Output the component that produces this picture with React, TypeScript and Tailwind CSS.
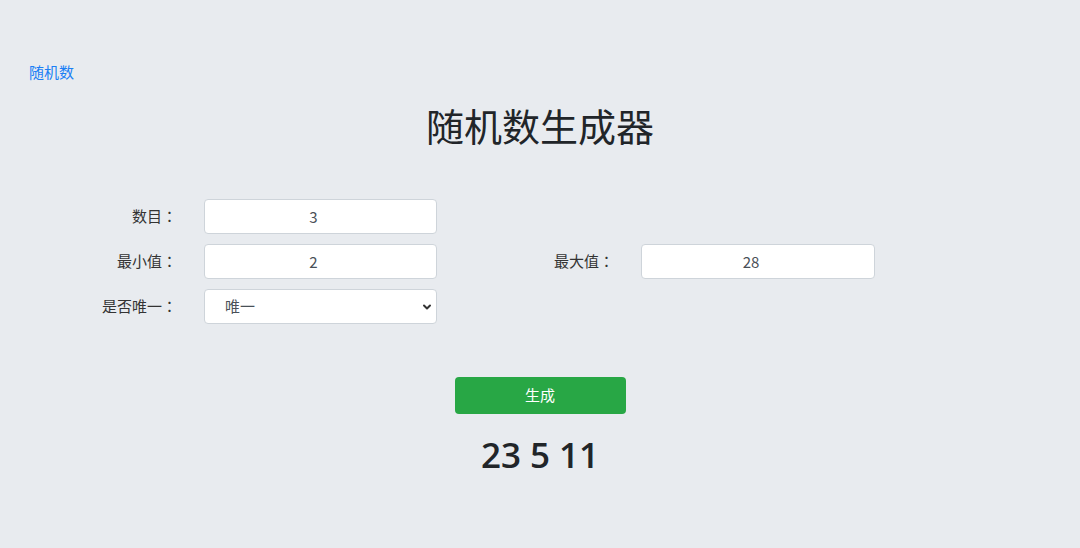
import { useState } from 'react';

const font = { fontFamily: '"Noto Sans CJK SC", "Noto Sans", sans-serif' };
const colonFont = { fontFamily: '"Noto Sans CJK JP", sans-serif' };

function Label({ text }: { text: string }) {
  return (
    <label className="flex items-center justify-end pr-[27px] text-[#333]">
      {text}
      <span style={colonFont}>：</span>
    </label>
  );
}

export default function App() {
  const [count, setCount] = useState('3');
  const [min, setMin] = useState('2');
  const [max, setMax] = useState('28');
  const [unique, setUnique] = useState('唯一');
  const [result] = useState([23, 5, 11]);

  const inputCls =
    'h-[35px] w-full rounded-[4px] border border-[#ced4da] bg-white pr-[14px] text-center text-[15px] text-[#495057] outline-none';

  return (
    <div className="h-screen w-screen bg-[#e8ebef] text-[#212529]" style={font}>
      <div className="pt-[59px] pl-[29px]">
        <a href="#" className="text-[15px] leading-[24px] text-[#1a7ff5]">
          随机数
        </a>
      </div>

      <h1 className="mt-[18px] text-center text-[38px] leading-[46px] font-normal">随机数生成器</h1>

      {/* form grid */}
      <div className="mt-[51px] grid grid-cols-[204px_233px_204px_234px] gap-y-[10px] text-[15px]">
        <Label text="数目" />
        <input className={inputCls} value={count} onChange={(e) => setCount(e.target.value)} />
        <div />
        <div />

        <Label text="最小值" />
        <input className={inputCls} value={min} onChange={(e) => setMin(e.target.value)} />
        <Label text="最大值" />
        <input className={inputCls} value={max} onChange={(e) => setMax(e.target.value)} />

        <Label text="是否唯一" />
        <div className="relative h-[35px] w-full">
          <select
            value={unique}
            onChange={(e) => setUnique(e.target.value)}
            className="h-full w-full appearance-none rounded-[4px] border border-[#ced4da] bg-white pl-[20px] text-[15px] text-[#495057] outline-none"
          >
            <option>唯一</option>
            <option>不唯一</option>
          </select>
          <svg
            className="pointer-events-none absolute top-1/2 right-[5px] h-[10px] w-[10px] -translate-y-1/2"
            viewBox="0 0 10 10"
            fill="none"
            stroke="#333"
            strokeWidth={2}
          >
            <path d="M2 3.5l3 3 3-3" strokeLinecap="round" strokeLinejoin="round" />
          </svg>
        </div>
        <div />
        <div />
      </div>

      <div className="mt-[53px] flex flex-col items-center">
        <button className="h-[37px] w-[171px] rounded-[4px] bg-[#28a745] text-[15px] text-white">生成</button>
        <div
          className="mt-[20px] text-[35px] leading-[42px] font-semibold text-[#212529]"
          style={{ fontFamily: '"Open Sans", "Noto Sans", sans-serif' }}
        >
          {result.join(' ')}
        </div>
      </div>
    </div>
  );
}
